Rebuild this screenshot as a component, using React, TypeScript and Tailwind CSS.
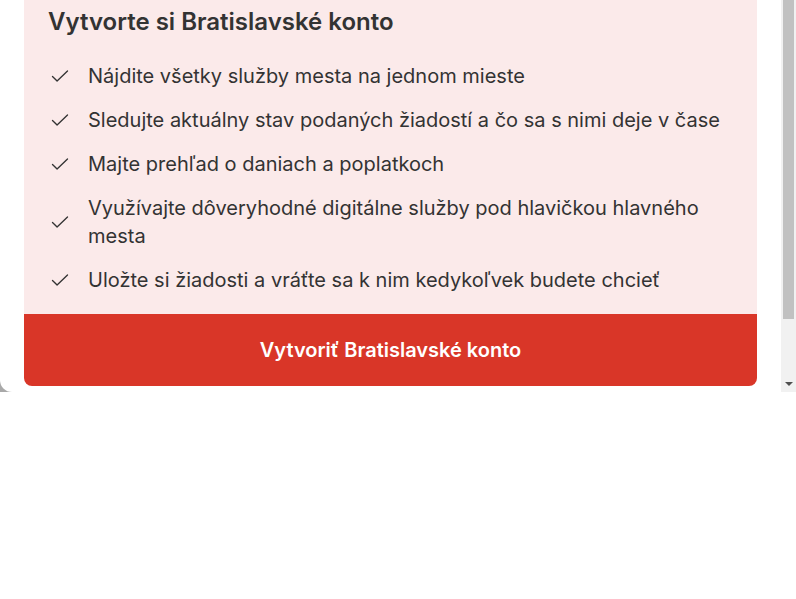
const items: string[] = [
  "Nájdite všetky služby mesta na jednom mieste",
  "Sledujte aktuálny stav podaných žiadostí a čo sa s nimi deje v čase",
  "Majte prehľad o daniach a poplatkoch",
  "Využívajte dôveryhodné digitálne služby pod hlavičkou hlavného mesta",
  "Uložte si žiadosti a vráťte sa k nim kedykoľvek budete chcieť",
];

function Check() {
  return (
    <svg width="20" height="20" viewBox="0 0 24 24" fill="none" stroke="#333333" strokeWidth="1.6" strokeLinecap="round" strokeLinejoin="round">
      <path d="M3 12.5l5.5 5.5L21 6" />
    </svg>
  );
}

export default function App() {
  return (
    <div className="w-[796px] bg-white" style={{ fontFamily: "Inter, 'Noto Sans', sans-serif" }}>
      <div className="flex h-[392px] bg-[#a9a9a9]">
        {/* card */}
        <div className="flex w-[781px] flex-col rounded-bl-xl bg-white px-6 pb-[6px]">
          <div className="flex flex-1 flex-col bg-[#fbeaea] px-6 pt-2 pb-5">
            <h2 className="text-[24px] leading-7 font-semibold text-[#333333]">Vytvorte si Bratislavské konto</h2>
            <ul className="mt-[26px] flex flex-col gap-4">
              {items.map((t) => (
                <li key={t} className="flex items-center gap-[18px] text-[20px] leading-7 text-[#333333]">
                  <span className="ml-[2px] flex shrink-0 items-center">
                    <Check />
                  </span>
                  <span>{t}</span>
                </li>
              ))}
            </ul>
          </div>
          <button className="flex h-[72px] items-center justify-center rounded-b-lg bg-[#d93628] text-[20px] font-semibold text-white">
            Vytvoriť Bratislavské konto
          </button>
        </div>
        {/* scrollbar */}
        <div className="flex w-[15px] flex-col bg-[#f1f1f1]">
          <div className="mx-[2px] h-[319px] bg-[#c1c1c1]" />
          <div className="flex flex-1 items-end justify-center pb-[6px]">
            <div className="h-0 w-0 border-x-[4px] border-t-[4px] border-x-transparent border-t-[#505050]" />
          </div>
        </div>
      </div>
      <div className="h-[207px] bg-white" />
    </div>
  );
}
